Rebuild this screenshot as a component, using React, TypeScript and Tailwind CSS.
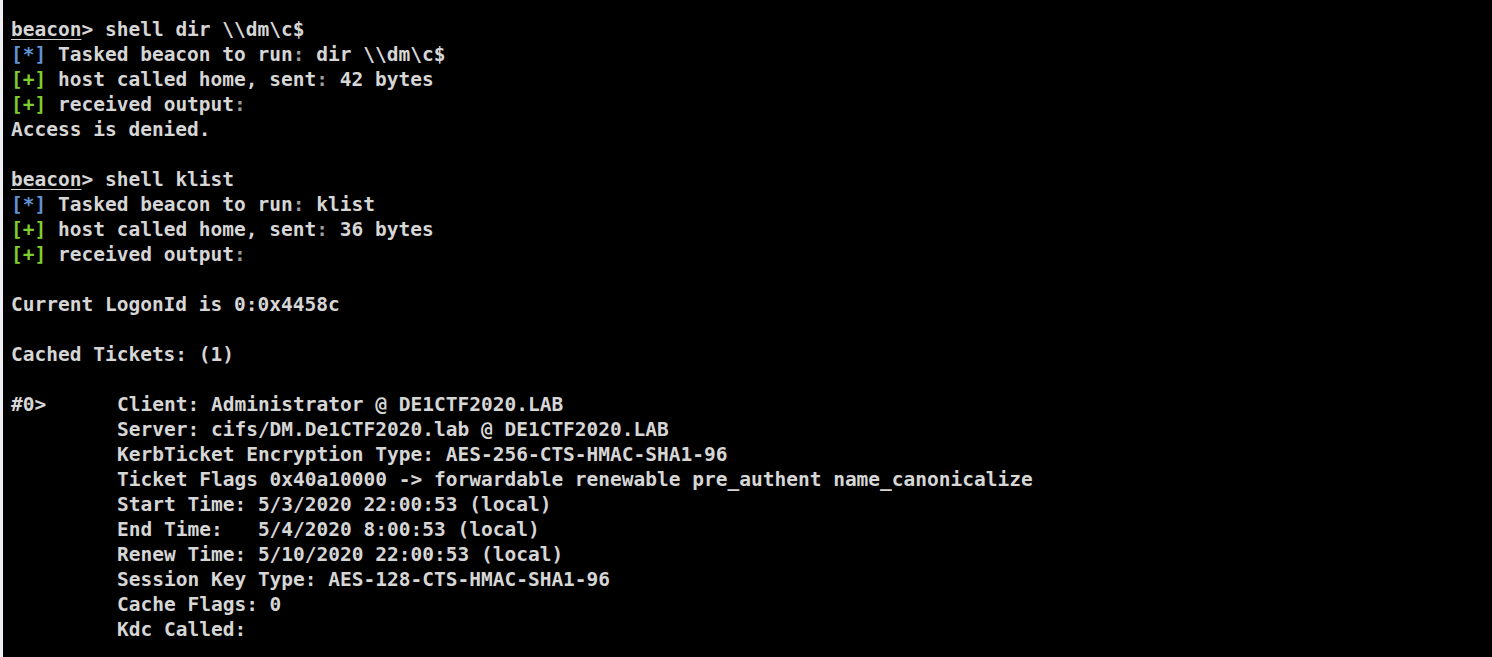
const Prompt = ({ cmd }: { cmd: string }) => (
  <div>
    <span className="underline underline-offset-[3px]">beacon</span>&gt; {cmd}
  </div>
);

const Info = ({ text }: { text: string }) => (
  <div>
    <span className="text-[#5f93d3]">[*]</span> Tasked beacon to run<span className="text-[#9c9c9c]">:</span> {text}
  </div>
);

const Ok = ({ children }: { children: React.ReactNode }) => (
  <div>
    <span className="text-[#7fcf2c]">[+]</span> {children}
  </div>
);

const Dim = () => <span className="text-[#9c9c9c]">:</span>;

const ticket = [
  "Client: Administrator @ DE1CTF2020.LAB",
  "Server: cifs/DM.De1CTF2020.lab @ DE1CTF2020.LAB",
  "KerbTicket Encryption Type: AES-256-CTS-HMAC-SHA1-96",
  "Ticket Flags 0x40a10000 -> forwardable renewable pre_authent name_canonicalize",
  "Start Time: 5/3/2020 22:00:53 (local)",
  "End Time:   5/4/2020 8:00:53 (local)",
  "Renew Time: 5/10/2020 22:00:53 (local)",
  "Session Key Type: AES-128-CTS-HMAC-SHA1-96",
  "Cache Flags: 0",
  "Kdc Called:",
];

export default function App() {
  return (
    <div className="h-[657px] w-[1492px] overflow-hidden bg-black border-l-[3px] border-[#eef0f4]">
      <div className="pl-2 pt-[17px] font-['DejaVu_Sans_Mono',monospace] text-[19.5px] font-bold leading-[25px] text-[#d6d6d6] whitespace-pre">
        <Prompt cmd="shell dir \\dm\c$" />
        <Info text="dir \\dm\c$" />
        <Ok>
          host called home, sent<Dim /> 42 bytes
        </Ok>
        <Ok>
          received output<Dim />
        </Ok>
        <div>Access is denied.</div>
        <div>&nbsp;</div>
        <Prompt cmd="shell klist" />
        <Info text="klist" />
        <Ok>
          host called home, sent<Dim /> 36 bytes
        </Ok>
        <Ok>
          received output<Dim />
        </Ok>
        <div>&nbsp;</div>
        <div>Current LogonId is 0:0x4458c</div>
        <div>&nbsp;</div>
        <div>Cached Tickets: (1)</div>
        <div>&nbsp;</div>
        <div className="flex">
          <div className="w-[106px] shrink-0">#0&gt;</div>
          <div>
            {ticket.map((line) => (
              <div key={line}>{line}</div>
            ))}
          </div>
        </div>
      </div>
    </div>
  );
}
